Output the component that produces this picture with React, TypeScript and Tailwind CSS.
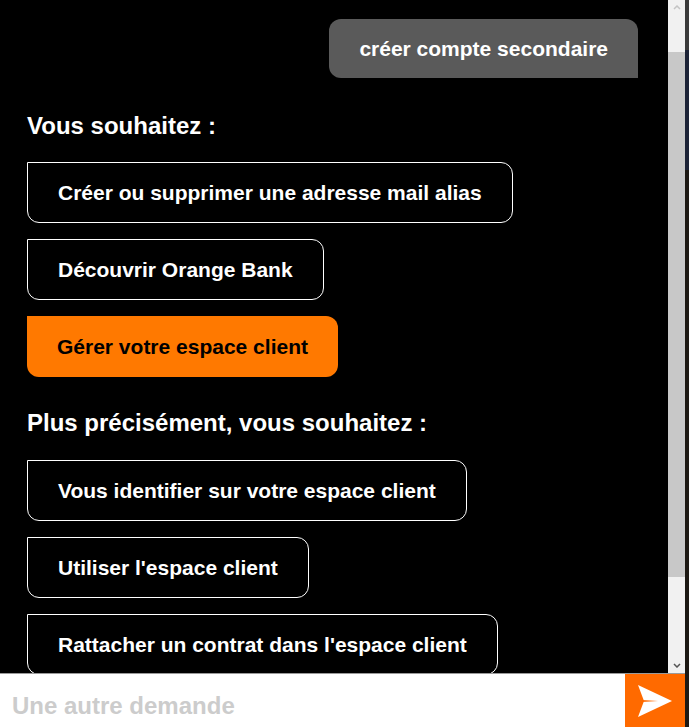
const first = [
  { label: 'Créer ou supprimer une adresse mail alias', active: false },
  { label: 'Découvrir Orange Bank', active: false },
  { label: 'Gérer votre espace client', active: true },
];

const second = [
  'Vous identifier sur votre espace client',
  "Utiliser l'espace client",
  "Rattacher un contrat dans l'espace client",
];

function Choice({ label, active }: { label: string; active?: boolean }) {
  return (
    <div
      className={
        'h-[61px] shrink-0 flex items-center self-start px-[30px] rounded-xl rounded-tl-none text-[21px] font-bold whitespace-nowrap ' +
        (active ? 'bg-[#ff7900] text-black' : 'border border-white text-white')
      }
    >
      {label}
    </div>
  );
}

function SendIcon() {
  return (
    <svg width="34" height="32" viewBox="0 0 34 32">
      <polygon points="0,0 34,16 0,32 6,16" fill="#fff" />
      <polygon points="4,15 20,16 4,17" fill="#ff6a00" />
    </svg>
  );
}

export default function App() {
  return (
    <div className="w-[689px] h-[727px] flex bg-black overflow-hidden font-['Liberation_Sans',Arial,sans-serif]">
      <div className="w-[685px] flex flex-col">
        <div className="h-[673px] flex overflow-hidden">
          {/* Conversation */}
          <div className="flex-1 flex flex-col pl-[27px] pr-[30px] pt-[19px] overflow-hidden">
            <div className="self-end h-[59px] shrink-0 flex items-center px-[30px] bg-[#5a5a5a] rounded-xl rounded-br-none text-white text-[21px] font-bold">
              créer compte secondaire
            </div>

            <p className="mt-[34px] text-white text-[24px] font-bold leading-[28px]">Vous souhaitez :</p>
            <div className="mt-[22px] flex flex-col gap-[16px]">
              {first.map((c) => (
                <Choice key={c.label} label={c.label} active={c.active} />
              ))}
            </div>

            <p className="mt-[32px] text-white text-[24px] font-bold leading-[28px]">
              Plus précisément, vous souhaitez :
            </p>
            <div className="mt-[23px] flex flex-col gap-[16px]">
              {second.map((c) => (
                <Choice key={c} label={c} />
              ))}
            </div>
          </div>

          {/* Scrollbar */}
          <div className="w-[17px] shrink-0 flex flex-col bg-[#f1f1f1]">
            <div className="h-[14px] flex items-center justify-center">
              <svg width="8" height="5" viewBox="0 0 8 5">
                <path d="M1 4 L4 1 L7 4" stroke="#c4c4c4" strokeWidth="1.5" fill="none" />
              </svg>
            </div>
            <div className="h-[38px]" />
            <div className="h-[525px] bg-[#c8c8c8]" />
            <div className="flex-1" />
            <div className="h-[16px] flex items-center justify-center">
              <svg width="8" height="5" viewBox="0 0 8 5">
                <path d="M1 1 L4 4 L7 1" stroke="#555" strokeWidth="1.5" fill="none" />
              </svg>
            </div>
          </div>
        </div>

        {/* Input */}
        <div className="flex-1 flex border-t border-[#9a9a9a] bg-white">
          <div className="flex-1 flex items-center pl-[12px] pt-[10px] text-[24px] font-bold text-[#cccccc]">
            Une autre demande
          </div>
          <div className="w-[60px] bg-[#ff6a00] flex items-center justify-center">
            <SendIcon />
          </div>
        </div>
      </div>
      <div className="w-[4px] flex flex-col">
        <div className="h-[50px] bg-[#3a3a3a]" />
        <div className="h-[120px] bg-[#1b2236]" />
        <div className="flex-1 bg-[#1c1813]" />
      </div>
    </div>
  );
}
